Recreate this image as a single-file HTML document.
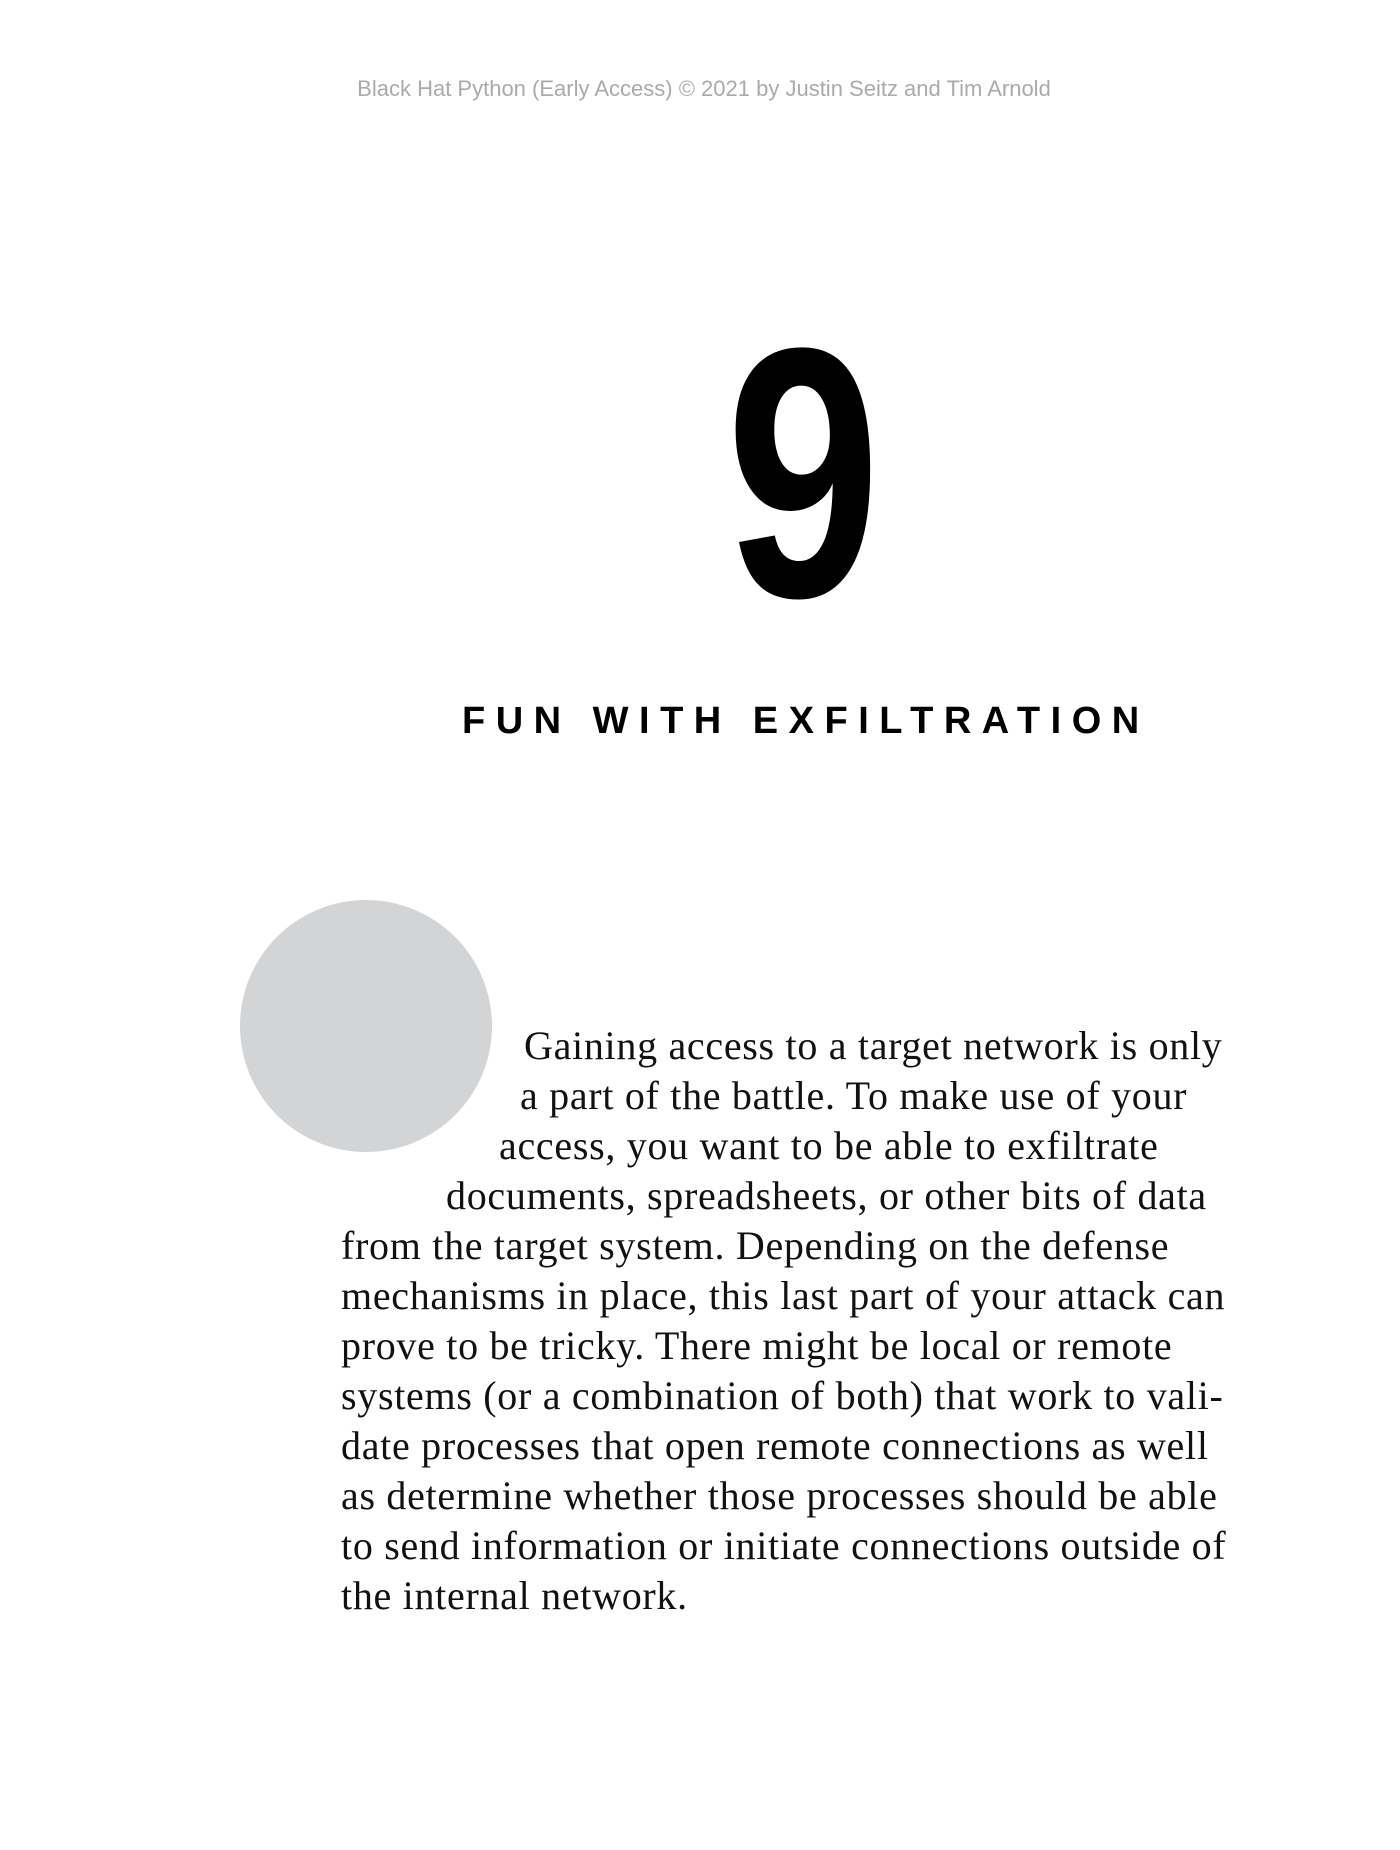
<!DOCTYPE html>
<html><head><meta charset="utf-8"><style>
html,body{margin:0;padding:0;background:#fff;}
body{width:1400px;height:1850px;position:relative;overflow:hidden;}
.hdr{position:absolute;top:76px;left:8px;width:1392px;text-align:center;font:22px "Liberation Sans",sans-serif;color:#aaa;}
.nine{position:absolute;left:726px;top:314px;width:160px;height:330px;font:bold 356px/320px "Liberation Sans",sans-serif;color:#000;transform:scaleX(0.78);transform-origin:left top;}
.title{position:absolute;left:462px;top:699px;font:bold 38px/44px "Liberation Sans",sans-serif;letter-spacing:10.5px;white-space:nowrap;color:#000;}
.circ{position:absolute;left:240px;top:900px;width:252px;height:252px;border-radius:50%;background:#d3d4d6;}
.l{position:absolute;font:40px/50px "Liberation Serif",serif;letter-spacing:0.7px;color:#111;white-space:nowrap;}
</style></head><body>
<div class="hdr">Black Hat Python (Early Access) © 2021 by Justin Seitz and Tim Arnold</div>
<div class="nine">9</div>
<div class="title">FUN WITH EXFILTRATION</div>
<div class="circ"></div>
<div class="l" style="left:524px;top:1021px">Gaining access to a target network is only</div>
<div class="l" style="left:520px;top:1071px">a part of the battle. To make use of your</div>
<div class="l" style="left:499px;top:1121px">access, you want to be able to exfiltrate</div>
<div class="l" style="left:446px;top:1171px">documents, spreadsheets, or other bits of data</div>
<div class="l" style="left:341px;top:1221px">from the target system. Depending on the defense</div>
<div class="l" style="left:341px;top:1271px">mechanisms in place, this last part of your attack can</div>
<div class="l" style="left:341px;top:1321px">prove to be tricky. There might be local or remote</div>
<div class="l" style="left:341px;top:1371px">systems (or a combination of both) that work to vali-</div>
<div class="l" style="left:341px;top:1421px">date processes that open remote connections as well</div>
<div class="l" style="left:341px;top:1471px">as determine whether those processes should be able</div>
<div class="l" style="left:341px;top:1521px">to send information or initiate connections outside of</div>
<div class="l" style="left:341px;top:1571px">the internal network.</div>
</body></html>
